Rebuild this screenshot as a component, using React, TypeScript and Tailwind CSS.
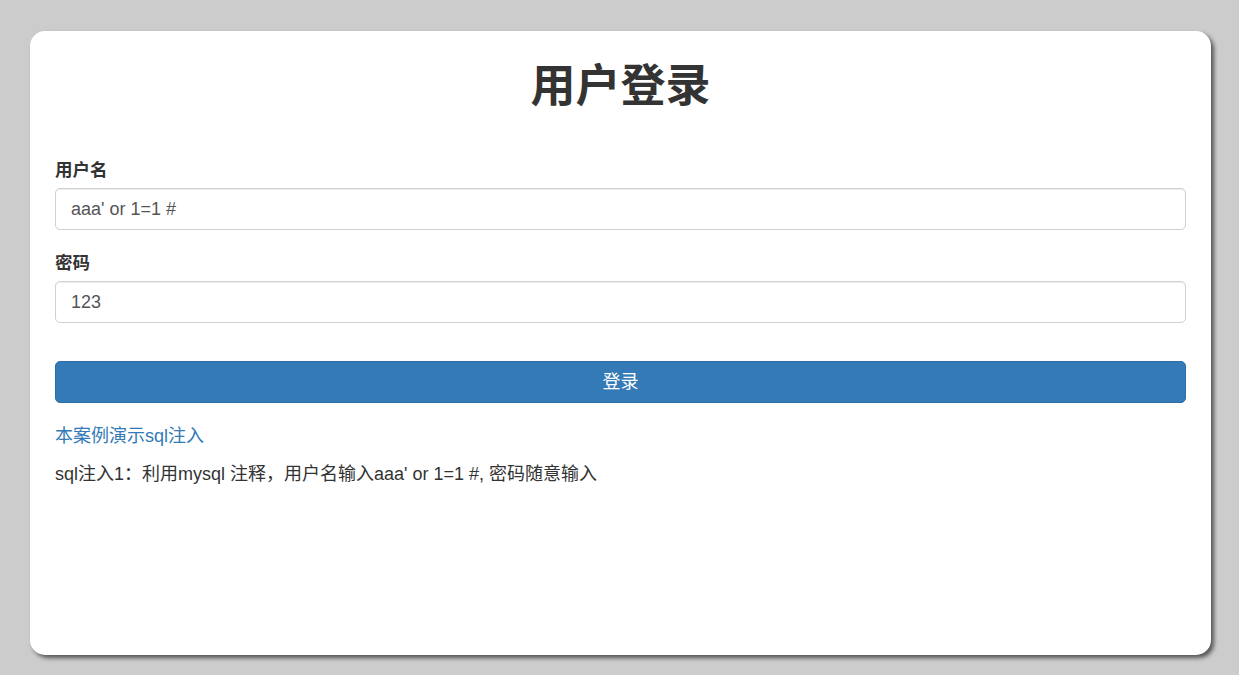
export default function App() {
  const font = { fontFamily: '"Liberation Sans", Arial, "Noto Sans CJK SC", sans-serif' }
  return (
    <div className="min-h-[675px] w-full bg-[#cccccc] pt-[31px] text-[#333333]" style={font}>
      <div className="mx-[28px] ml-[30px] h-[624px] rounded-[15px] bg-white px-[25px] shadow-[3px_3px_4px_#555555]">
        <h1 className="pt-[31px] text-center text-[45px] font-bold leading-[50px]">用户登录</h1>
        <form className="mt-[46px]" onSubmit={(e) => e.preventDefault()}>
          <div className="mb-[21px]">
            <label className="mb-[5px] block text-[17.5px] font-bold leading-[25px]">用户名</label>
            <input
              defaultValue="aaa' or 1=1 #"
              className="block h-[42px] w-full rounded-[5px] border border-[#d0d0d0] px-[15px] text-[18px] text-[#555555] shadow-[inset_0_1px_1px_rgba(0,0,0,0.075)] outline-none"
            />
          </div>
          <div className="mb-[38px]">
            <label className="mb-[5px] block text-[17.5px] font-bold leading-[25px]">密码</label>
            <input
              defaultValue="123"
              className="block h-[42px] w-full rounded-[5px] border border-[#d0d0d0] px-[15px] text-[18px] text-[#555555] shadow-[inset_0_1px_1px_rgba(0,0,0,0.075)] outline-none"
            />
          </div>
          <button
            type="submit"
            className="block h-[42px] w-full rounded-[5px] border border-[#2e6da4] bg-[#337ab7] text-[18px] text-white"
          >
            登录
          </button>
        </form>
        <p className="mt-[21px] text-[18px] leading-[25px]">
          <a href="#" className="text-[#337ab7]">本案例演示sql注入</a>
        </p>
        <p className="mt-[13px] text-[18px] leading-[25px]">
          sql注入1：利用mysql 注释，用户名输入aaa' or 1=1 #, 密码随意输入
        </p>
      </div>
    </div>
  )
}
